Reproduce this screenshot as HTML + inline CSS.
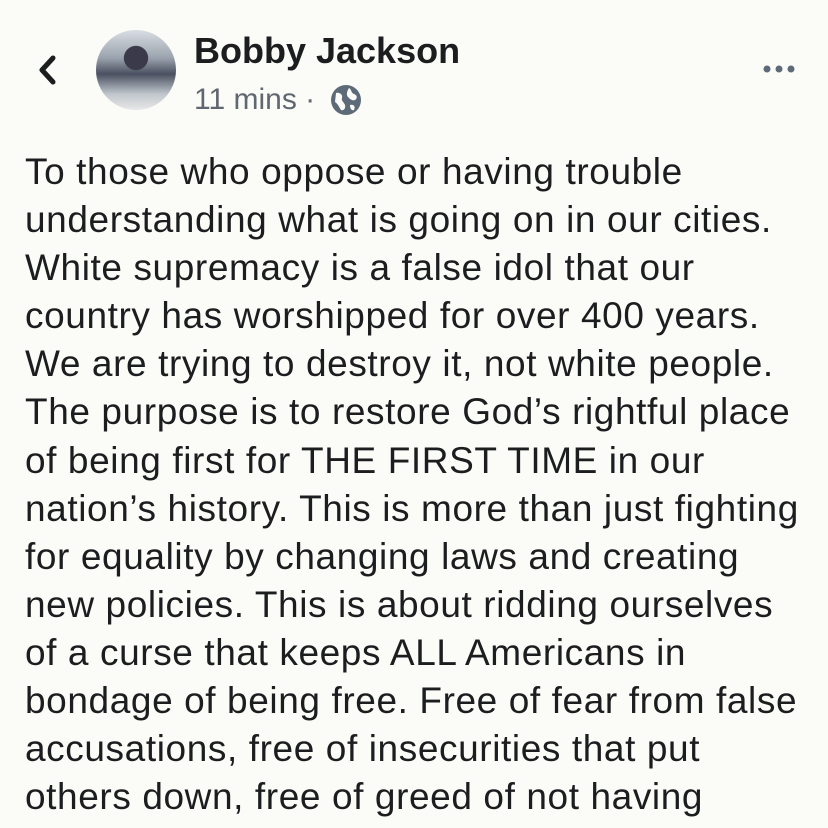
<!DOCTYPE html>
<html><head><meta charset="utf-8"><style>
html,body{margin:0;padding:0;background:#fbfbf7;width:828px;height:828px;overflow:hidden}
body{font-family:"Liberation Sans",sans-serif;color:#1b1d1f;position:relative}
.name{position:absolute;left:194px;top:30px;font-size:36px;font-weight:bold}
.meta{position:absolute;left:194px;top:83px;font-size:30px;color:#606770}
.av{position:absolute;left:96px;top:30px;width:80px;height:80px;border-radius:50%;background:radial-gradient(circle at 50% 35%,#3a3a4a 0 18%,transparent 19%),linear-gradient(180deg,#d8dde2 0%,#9aa3ad 35%,#4a5060 55%,#c0c6cc 80%,#e8e8e8 100%)}
.txt{position:absolute;left:25px;top:148px;width:810px;font-size:37px;letter-spacing:0.6px;line-height:48.1px;white-space:pre}
</style></head><body>
<svg style="position:absolute;left:36px;top:55px" width="24" height="30" viewBox="0 0 24 30"><path d="M17 3 L6 15 L17 27" fill="none" stroke="#1b1d1f" stroke-width="5" stroke-linecap="round" stroke-linejoin="round"/></svg>
<div class="av"></div>
<div class="name">Bobby Jackson</div>
<div class="meta">11 mins ·</div>
<svg style="position:absolute;left:330px;top:84px" width="32" height="32" viewBox="0 0 32 32"><circle cx="16" cy="16" r="15" fill="#5d6b78"/><path d="M6 9 C10 8 13 11 12 14 C11 17 14 18 15 21 C16 25 13 27 11 26 C9 23 8 20 5 18 Z M19 4 C22 6 21 9 24 10 C27 11 28 14 25 16 C22 17 20 15 18 13 C16 11 17 7 19 4 Z M20 21 C23 20 26 22 24 26 C22 27 20 25 20 21 Z" fill="#fbfbf7"/></svg>
<svg style="position:absolute;left:762px;top:63px" width="34" height="12"><circle cx="5" cy="6" r="3.5" fill="#5d6b78"/><circle cx="17" cy="6" r="3.5" fill="#5d6b78"/><circle cx="29" cy="6" r="3.5" fill="#5d6b78"/></svg>
<div class="txt">To those who oppose or having trouble
understanding what is going on in our cities.
White supremacy is a false idol that our
country has worshipped for over 400 years.
We are trying to destroy it, not white people.
The purpose is to restore God’s rightful place
of being first for THE FIRST TIME in our
nation’s history. This is more than just fighting
for equality by changing laws and creating
new policies. This is about ridding ourselves
of a curse that keeps ALL Americans in
bondage of being free. Free of fear from false
accusations, free of insecurities that put
others down, free of greed of not having</div>
</body></html>
